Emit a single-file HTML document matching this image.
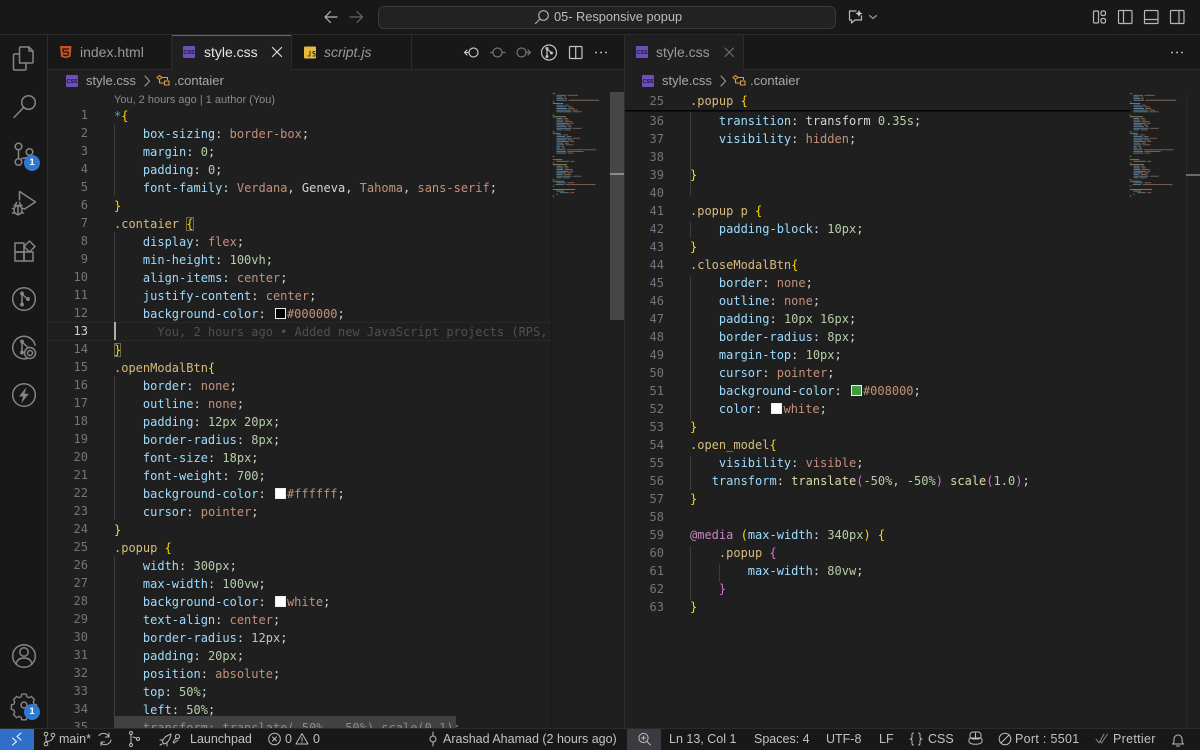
<!DOCTYPE html>
<html><head><meta charset="utf-8"><style>
html,body{margin:0;padding:0;background:#181818;width:1200px;height:750px;overflow:hidden}
body{position:relative;font-family:"Liberation Sans",sans-serif;color:#ccc}
.a{position:absolute}
svg{position:absolute;overflow:visible;fill:none;stroke-linecap:round;stroke-linejoin:round}
.code{position:absolute;font:12px/18px "DejaVu Sans Mono","Liberation Mono",monospace;color:#d4d4d4}
.code div{white-space:pre}
.nums{position:absolute;font:12px/18px "DejaVu Sans Mono","Liberation Mono",monospace;text-align:right;color:#6e7681}
.nums div,.code div{height:18px}
i{font-style:normal}
.p{color:#9cdcfe}.v{color:#c4917a}.n{color:#b5cea8}.s{color:#d7ba7d}.b{color:#ffd700}.m{color:#c586c0}.o{color:#da70d6}.f{color:#dcdcaa}.w{color:#569cd6}
.sw{display:inline-block;width:9px;height:9px;border:1px solid #eee;margin:0 1px 0 2px;vertical-align:-1px}
.g{position:absolute;width:1px;background:#3c3c3c}
.t{position:absolute;white-space:nowrap}
.st{position:absolute;top:731px;font-size:12.5px;line-height:17px;color:#c2c2c2;white-space:nowrap}
.badge{position:absolute;width:16px;height:16px;border-radius:50%;background:#2f7ad1;color:#fff;font:bold 9.5px/16px "Liberation Sans",sans-serif;text-align:center}
.css{position:absolute;width:12px;height:12px;background:#6b4fbb;border-radius:1px;color:#1d1533;font:bold 5.5px/15px "Liberation Sans",sans-serif;text-align:center}
</style></head><body>

<!-- title bar -->
<div class="a" style="left:0;top:34px;width:1200px;height:1px;background:#2b2b2b"></div>
<div class="a" style="left:378px;top:6px;width:456px;height:21px;border:1px solid #3a3a3a;border-radius:6px;background:#222"></div>
<svg style="left:0;top:0" width="1200" height="35" stroke="#b8b8b8" stroke-width="1.2">
<path d="M337 17H325M330.500 11.500L325 17l5.500 5.500"/>
<path stroke="#666" d="M350 17h12.500M357 11.500l5.500 5.500-5.500 5.500"/>
<circle cx="543.500" cy="15.500" r="4.800" stroke="#aaa"/><path stroke="#aaa" d="M540 19l-4.500 4.500"/>
<path d="M856 11h-6.500v9h2l0 3 3.500-3h6.500v-4"/><path stroke="none" fill="#c8c8c8" d="M859 10l1.100 2.400 2.400 1.100-2.400 1.100-1.100 2.400-1.100-2.400-2.400-1.100 2.400-1.100z"/>
<path stroke="#999" d="M869.500 15.500l3.500 3 3.500-3"/>
<g stroke="#b5b5b5">
<rect x="1093.500" y="11" width="5" height="12" rx="1"/><rect x="1101" y="11" width="4.500" height="4.500" rx="1.500"/><rect x="1101" y="18.500" width="4.500" height="4.500" rx="1.500"/>
<rect x="1118.500" y="10.500" width="13.500" height="13" rx="1"/><path d="M1123.500 10.500v13"/>
<rect x="1144.500" y="10.500" width="13.500" height="13" rx="1"/><path d="M1144.500 19.500h13.500"/>
<rect x="1170.500" y="10.500" width="13.500" height="13" rx="1"/><path d="M1179 10.500v13"/>
</g>
</svg>
<div class="t" style="left:554px;top:9px;font-size:12.8px;line-height:16px;color:#bdbdbd">05- Responsive popup</div>

<!-- editor backgrounds -->
<div class="a" style="left:48px;top:35px;width:1152px;height:693px;background:#1f1f1f"></div>
<div class="a" style="left:48px;top:35px;width:1152px;height:34px;background:#181818;border-bottom:1px solid #2b2b2b"></div>
<div class="a" style="left:47px;top:35px;width:1px;height:693px;background:#2b2b2b"></div>
<div class="a" style="left:624px;top:35px;width:1px;height:693px;background:#2e2e2e"></div>

<!-- tabs left -->
<div class="a" style="left:171px;top:35px;width:1px;height:34px;background:#2b2b2b"></div>
<div class="a" style="left:172px;top:35px;width:119px;height:35px;background:#1f1f1f;border-top:1px solid #2f72b8;box-sizing:border-box"></div>
<div class="a" style="left:291px;top:35px;width:1px;height:34px;background:#2b2b2b"></div>
<div class="a" style="left:411px;top:35px;width:1px;height:34px;background:#2b2b2b"></div>
<svg style="left:0;top:0" width="400" height="70">
<path fill="#c9532a" stroke="none" d="M60 46h11.500l-1 10.800-4.800 1.400-4.700-1.400z"/><path stroke="#1f1308" stroke-width="1.300" d="M68.500 49h-5.500l.3 3h5l-.3 3-2.300.8-2.300-.8"/>
<path stroke="#ddd" stroke-width="1.200" d="M272.500 47.500l9 9M281.500 47.500l-9 9"/>
<rect x="304" y="46.500" width="12" height="12" rx="1" fill="#e8b93f"/><path stroke="#40351a" d="M310 51v5h-2M315 51.500h-2v2h2v2.500h-2"/>
</svg>
<div class="t" style="left:80px;top:44px;font-size:14px;line-height:17px;color:#9a9a9a">index.html</div>
<div class="css" style="left:183px;top:46px">CSS</div>
<div class="t" style="left:204px;top:44px;font-size:14px;line-height:17px;color:#e6e6e6">style.css</div>
<div class="t" style="left:324px;top:44px;font-size:14px;line-height:17px;color:#9a9a9a;font-style:italic">script.js</div>

<!-- actions -->
<svg style="left:0;top:0" width="1200" height="70" stroke="#c4c4c4" stroke-width="1.200">
<circle cx="473.500" cy="52.500" r="4.500"/><path d="M469 52.500h-4.500M467 50l-2.500 2.500 2.500 2.500"/>
<g stroke="#747474"><circle cx="497.500" cy="52.500" r="4.500"/><path d="M490.500 52.500h2.500M502 52.500h3"/>
<circle cx="521.500" cy="52.500" r="4.500"/><path d="M526 52.500h4.500M528 50l2.500 2.500-2.500 2.500"/></g>
<circle cx="549" cy="52.500" r="7.500"/><path d="M547 48.500v8M547 49l4.500 3.800"/><circle cx="547" cy="48.500" r=".9" fill="#c4c4c4"/><circle cx="547" cy="56.500" r=".9" fill="#c4c4c4"/><circle cx="551.500" cy="53" r=".9" fill="#c4c4c4"/>
<rect x="569.500" y="46.500" width="12.500" height="12" rx="1"/><path d="M575.700 46.500v12"/>
<path stroke="#ccc" stroke-width="1.800" d="M596 52.500h.1M601 52.500h.1M606 52.500h.1M1172 52.500h.1M1177 52.500h.1M1182 52.500h.1"/>
</svg>

<!-- right tab -->
<div class="a" style="left:625px;top:35px;width:118px;height:35px;background:#1f1f1f"></div>
<div class="a" style="left:743px;top:35px;width:1px;height:34px;background:#2b2b2b"></div>
<div class="css" style="left:636px;top:46px">CSS</div>
<div class="t" style="left:656px;top:44px;font-size:14px;line-height:17px;color:#9a9a9a">style.css</div>
<svg style="left:0;top:0" width="800" height="70"><path stroke="#6f6f6f" stroke-width="1.200" d="M725 48l8.500 8.500M733.500 48l-8.500 8.500"/></svg>

<!-- breadcrumbs -->
<div class="css" style="left:66px;top:75px">CSS</div>
<div class="t" style="left:86px;top:73px;font-size:13px;line-height:16px;color:#a8a8a8">style.css</div>
<div class="t" style="left:174px;top:73px;font-size:13px;line-height:16px;color:#a8a8a8">.contaier</div>
<div class="css" style="left:642px;top:75px">CSS</div>
<div class="t" style="left:662px;top:73px;font-size:13px;line-height:16px;color:#a8a8a8">style.css</div>
<div class="t" style="left:750px;top:73px;font-size:13px;line-height:16px;color:#a8a8a8">.contaier</div>
<svg style="left:0;top:0" width="800" height="95" stroke-width="1.100">
<path stroke="#999" d="M145 76l4.500 5-4.500 5M721 76l4.500 5-4.500 5"/>
<g stroke="#d9a343"><path d="M157 77.500l2.500-2 2.500 2-2.500 2zM159.500 79.500v3.500h5M164.500 81h4.500v4h-4.500zM162 77.500h5.500v2"/></g>
<g stroke="#d9a343"><path d="M733 77.500l2.500-2 2.500 2-2.500 2zM735.500 79.500v3.500h5M740.500 81h4.500v4h-4.500zM738 77.500h5.500v2"/></g>
</svg>
<div class="t" style="left:114px;top:93px;font-size:11px;line-height:14px;color:#8b8b8b">You, 2 hours ago | 1 author (You)</div>

<!-- current line -->
<div class="a" style="left:48px;top:322px;width:503px;height:17px;border-top:1px solid #282828;border-bottom:1px solid #282828"></div>

<!-- indent guides left -->
<div class="g" style="left:114px;top:124px;height:72px"></div>
<div class="g" style="left:114px;top:232px;height:90px"></div>
<div class="g" style="left:114px;top:376px;height:144px"></div>
<div class="g" style="left:114px;top:556px;height:162px"></div>
<div class="a" style="left:114px;top:322px;width:2px;height:18px;background:#aeafad"></div>

<!-- selection -->
<div class="a" style="left:114px;top:716px;width:342px;height:12px;background:#414141"></div>

<!-- left numbers -->
<div class="a" style="left:48px;top:107px;width:503px;height:621px;overflow:hidden">
<div class="nums" style="left:0;top:-1px;width:40px">
<div>1</div><div>2</div><div>3</div><div>4</div><div>5</div><div>6</div><div>7</div><div>8</div><div>9</div><div>10</div><div>11</div><div>12</div><div style="color:#ccc">13</div><div>14</div><div>15</div><div>16</div><div>17</div><div>18</div><div>19</div><div>20</div><div>21</div><div>22</div><div>23</div><div>24</div><div>25</div><div>26</div><div>27</div><div>28</div><div>29</div><div>30</div><div>31</div><div>32</div><div>33</div><div>34</div><div>35</div>
</div>
<div class="code" style="left:66px;top:0;width:437px;overflow:hidden">
<div><i class="w">*</i><i class="b">{</i></div>
<div>    <i class="p">box-sizing</i>: <i class="v">border-box</i>;</div>
<div>    <i class="p">margin</i>: <i class="n">0</i>;</div>
<div>    <i class="p">padding</i>: <i class="n">0</i>;</div>
<div>    <i class="p">font-family</i>: <i class="v">Verdana</i>, Geneva, <i class="v">Tahoma</i>, <i class="v">sans-serif</i>;</div>
<div><i class="b">}</i></div>
<div><i class="s">.contaier</i> <i class="b" style="outline:1px solid #6b6b50;outline-offset:-1px">{</i></div>
<div>    <i class="p">display</i>: <i class="v">flex</i>;</div>
<div>    <i class="p">min-height</i>: <i class="n">100vh</i>;</div>
<div>    <i class="p">align-items</i>: <i class="v">center</i>;</div>
<div>    <i class="p">justify-content</i>: <i class="v">center</i>;</div>
<div>    <i class="p">background-color</i>: <i class="sw" style="background:#000"></i><i class="v">#000000</i>;</div>
<div style="color:#4f4f4f">      You, 2 hours ago • Added new JavaScript projects (RPS, Calculator and more)</div>
<div><i class="b" style="outline:1px solid #6b6b50;outline-offset:-1px">}</i></div>
<div><i class="s">.openModalBtn</i><i class="b">{</i></div>
<div>    <i class="p">border</i>: <i class="v">none</i>;</div>
<div>    <i class="p">outline</i>: <i class="v">none</i>;</div>
<div>    <i class="p">padding</i>: <i class="n">12px 20px</i>;</div>
<div>    <i class="p">border-radius</i>: <i class="n">8px</i>;</div>
<div>    <i class="p">font-size</i>: <i class="n">18px</i>;</div>
<div>    <i class="p">font-weight</i>: <i class="n">700</i>;</div>
<div>    <i class="p">background-color</i>: <i class="sw" style="background:#fff"></i><i class="v">#ffffff</i>;</div>
<div>    <i class="p">cursor</i>: <i class="v">pointer</i>;</div>
<div><i class="b">}</i></div>
<div><i class="s">.popup</i> <i class="b">{</i></div>
<div>    <i class="p">width</i>: <i class="n">300px</i>;</div>
<div>    <i class="p">max-width</i>: <i class="n">100vw</i>;</div>
<div>    <i class="p">background-color</i>: <i class="sw" style="background:#fff"></i><i class="v">white</i>;</div>
<div>    <i class="p">text-align</i>: <i class="v">center</i>;</div>
<div>    <i class="p">border-radius</i>: <i class="n">12px</i>;</div>
<div>    <i class="p">padding</i>: <i class="n">20px</i>;</div>
<div>    <i class="p">position</i>: <i class="v">absolute</i>;</div>
<div>    <i class="p">top</i>: <i class="n">50%</i>;</div>
<div>    <i class="p">left</i>: <i class="n">50%</i>;</div>
<div style="color:#8c8c8c">    transform: translate(-50%, -50%) scale(0.1);</div>
</div>
</div>

<!-- right code -->
<div class="g" style="left:690px;top:110px;height:86px"></div>
<div class="g" style="left:690px;top:222px;height:16px"></div>
<div class="g" style="left:690px;top:276px;height:144px"></div>
<div class="g" style="left:690px;top:456px;height:34px"></div>
<div class="g" style="left:690px;top:546px;height:54px"></div>
<div class="g" style="left:719px;top:564px;height:18px"></div>
<div class="nums" style="left:625px;top:112px;width:39px">
<div>36</div><div>37</div><div>38</div><div>39</div><div>40</div><div>41</div><div>42</div><div>43</div><div>44</div><div>45</div><div>46</div><div>47</div><div>48</div><div>49</div><div>50</div><div>51</div><div>52</div><div>53</div><div>54</div><div>55</div><div>56</div><div>57</div><div>58</div><div>59</div><div>60</div><div>61</div><div>62</div><div>63</div>
</div>
<div class="code" style="left:690px;top:112px">
<div>    <i class="p">transition</i>: transform <i class="n">0.35s</i>;</div>
<div>    <i class="p">visibility</i>: <i class="v">hidden</i>;</div>
<div></div>
<div><i class="b">}</i></div>
<div></div>
<div><i class="s">.popup p</i> <i class="b">{</i></div>
<div>    <i class="p">padding-block</i>: <i class="n">10px</i>;</div>
<div><i class="b">}</i></div>
<div><i class="s">.closeModalBtn</i><i class="b">{</i></div>
<div>    <i class="p">border</i>: <i class="v">none</i>;</div>
<div>    <i class="p">outline</i>: <i class="v">none</i>;</div>
<div>    <i class="p">padding</i>: <i class="n">10px 16px</i>;</div>
<div>    <i class="p">border-radius</i>: <i class="n">8px</i>;</div>
<div>    <i class="p">margin-top</i>: <i class="n">10px</i>;</div>
<div>    <i class="p">cursor</i>: <i class="v">pointer</i>;</div>
<div>    <i class="p">background-color</i>: <i class="sw" style="background:#3f9b3f"></i><i class="v">#008000</i>;</div>
<div>    <i class="p">color</i>: <i class="sw" style="background:#fff"></i><i class="v">white</i>;</div>
<div><i class="b">}</i></div>
<div><i class="s">.open_model</i><i class="b">{</i></div>
<div>    <i class="p">visibility</i>: <i class="v">visible</i>;</div>
<div>   <i class="p">transform</i>: <i class="f">translate</i><i class="o">(</i><i class="n">-50%, -50%</i><i class="o">)</i> <i class="f">scale</i><i class="o">(</i><i class="n">1.0</i><i class="o">)</i>;</div>
<div><i class="b">}</i></div>
<div></div>
<div><i class="m">@media</i> <i class="b">(</i><i class="p">max-width</i>: <i class="n">340px</i><i class="b">)</i> <i class="b">{</i></div>
<div>    <i class="s">.popup</i> <i class="o">{</i></div>
<div>        <i class="p">max-width</i>: <i class="n">80vw</i>;</div>
<div>    <i class="o">}</i></div>
<div><i class="b">}</i></div>
</div>

<!-- sticky scroll -->
<div class="a" style="left:625px;top:92px;width:505px;height:18px;background:#1f1f1f"></div>
<div class="a" style="left:625px;top:110px;width:505px;height:2px;background:linear-gradient(#000,#151515)"></div>
<div class="nums" style="left:625px;top:92px;width:39px"><div>25</div></div>
<div class="code" style="left:690px;top:92px"><div><i class="s">.popup</i> <i class="b">{</i></div></div>

<!-- minimaps -->
<svg width="0" height="0" style="left:0;top:0"><g id="mm" fill="none" stroke-width=".55">
<path stroke="#5f8196" d="M4 2h10M4 3h6M4 4h7M4 5h11M4 8h7M4 9h10M4 10h11M4 11h15M4 12h16M4 16h6M4 17h7M4 18h7M4 19h13M4 20h9M4 21h11M4 22h16M4 23h6M4 26h5M4 27h9M4 28h16M4 29h10M4 30h13M4 31h7M4 32h8M4 33h3M4 34h4M4 35h9M4 36h10M4 37h10M4 42h13M4 45h6M4 46h7M4 47h7M4 48h13M4 49h10M4 50h6M4 51h16M4 52h5M4 55h10M3 56h9M8 61h9"/>
<path stroke="#846555" d="M16 2h11M12 3h2M13 4h2M17 5h33M13 8h4M16 9h5M17 10h6M21 11h6M22 12h9M12 16h4M13 17h4M13 18h8M19 19h3M15 20h4M17 21h3M22 22h9M12 23h7M11 26h5M15 27h5M22 28h7M16 29h6M19 30h4M13 31h4M14 32h8M9 33h3M10 34h3M15 35h32M16 36h17M16 37h6M19 42h4M12 45h4M13 46h4M13 47h8M19 48h3M16 49h4M12 50h7M22 51h9M11 52h7M16 55h7M14 56h32M19 61h4"/>
<path stroke="#8f8558" d="M0 1h2M0 6h1M0 7h11M0 14h1M0 15h14M0 24h1M0 25h8M0 39h1M0 41h10M0 43h1M0 44h15M0 53h1M0 54h12M0 57h1M0 59h24M4 60h8M4 62h1M0 63h1"/>
</g></svg>
<svg style="left:553px;top:92px" width="57" height="104" viewBox="0 0 62 63" preserveAspectRatio="none"><use href="#mm"/></svg>
<svg style="left:1130px;top:92px" width="57" height="104" viewBox="0 0 62 63" preserveAspectRatio="none"><use href="#mm"/></svg>
<div class="a" style="left:610px;top:92px;width:14px;height:228px;background:#464646"></div>
<div class="a" style="left:610px;top:173px;width:14px;height:2px;background:#8a8a8a"></div>
<div class="a" style="left:1186px;top:92px;width:1px;height:636px;background:#282828"></div>
<div class="a" style="left:1186px;top:174px;width:14px;height:2px;background:#6a6a6a"></div>
<div class="a" style="left:551px;top:92px;width:1px;height:636px;background:#1a1a1a"></div>

<!-- activity bar -->
<svg style="left:0;top:0" width="48" height="728" stroke="#858585" stroke-width="1.500">
<path d="M19.500 53v-5a1 1 0 0 1 1-1h8.500l4 4v11a1 1 0 0 1-1 1H19.500z"/><path d="M29 47v4h4"/><path d="M19.500 54H14.500a1 1 0 0 0-1 1v14a1 1 0 0 0 1 1h10.500a1 1 0 0 0 1-1v-6"/>
<circle cx="28.500" cy="102.500" r="6.800"/><path d="M23.500 107.500l-9.500 10"/>
<circle cx="18.500" cy="146.500" r="3.300"/><circle cx="18.500" cy="162" r="3.300"/><circle cx="29.500" cy="152" r="3.300"/><path d="M18.500 150v8.500M21.800 158.500c3-.5 7.700-1 7.700-3"/>
<path d="M19.500 200v-8.500l16 10.500-11 7"/>
<ellipse cx="18" cy="210" rx="4" ry="4.500"/><path d="M14 205.500h8M15.500 204.500l1-2M20.500 204.500l-1-2M12.500 208.500h1.500M12.500 213h2M23.500 208.500h-1.500M23.500 213h-2M18 206v9"/>
<rect x="15" y="243" width="9" height="9"/><rect x="15" y="252" width="9" height="9"/><rect x="24" y="252" width="9" height="9"/><path d="M29.500 241l5.500 5.500-5.500 5.500-5.500-5.500z"/>
<circle cx="24" cy="299" r="11.300"/><path d="M22 293.500v11M22 294l6 5.500"/><circle cx="22" cy="293.500" r="1.200" fill="#858585"/><circle cx="22" cy="304.500" r="1.200" fill="#858585"/><circle cx="28" cy="299" r="1.200" fill="#858585"/>
<path d="M35 345a11.300 11.300 0 1 0-8 13.500"/><path d="M22 341.500v11M22 342l6 5.500"/><circle cx="22" cy="341.500" r="1.200" fill="#858585"/><circle cx="22" cy="352.500" r="1.200" fill="#858585"/><circle cx="30" cy="353" r="5.500"/><circle cx="30" cy="353" r="2.500"/>
<circle cx="24" cy="395" r="11.300"/><path fill="#858585" stroke="none" d="M26.500 387l-7.500 9.500h4.200l-2.200 7 7.800-9.800h-4.300z"/>
<circle cx="24" cy="656" r="11.300"/><circle cx="24" cy="652" r="4.200"/><path d="M16 664c1-4.500 4-6 8-6s7 1.500 8 6"/>
<path d="M21.500 693h5l.7 2.800 2.500 1.100 2.500-1.400 3.500 3.500-1.400 2.500 1 2.600 2.700.7v5l-2.700.7-1 2.500 1.400 2.500-3.500 3.500-2.500-1.400-2.500 1-.7 2.900h-5l-.7-2.800-2.500-1-2.500 1.400-3.500-3.500 1.400-2.500-1-2.500-2.700-.8v-5l2.700-.7 1-2.600-1.400-2.500 3.500-3.500 2.500 1.400 2.500-1.100z" transform="translate(2.400 70.500) scale(.9)"/><circle cx="24" cy="705" r="3"/>
</svg>
<div class="badge" style="left:24px;top:155px">1</div>
<div class="badge" style="left:24px;top:704px">1</div>

<!-- status bar -->
<div class="a" style="left:0;top:728px;width:1200px;height:22px;background:#181818;border-top:1px solid #2b2b2b;box-sizing:border-box"></div>
<div class="a" style="left:0;top:729px;width:34px;height:21px;background:#2f6fc9"></div>
<div class="a" style="left:627px;top:729px;width:34px;height:21px;background:#3a3b41"></div>
<svg style="left:0;top:728px" width="1200" height="22" stroke="#bdbdbd" stroke-width="1">
<path stroke="#fff" d="M12.500 10l4 3.500-4 3.500M21 5l-4 3.500 4 3.500"/>
<circle cx="46" cy="6" r="1.800"/><circle cx="46" cy="16" r="1.800"/><circle cx="53" cy="7" r="1.800"/><path d="M46 8v6M46 13.500c3 0 7-1 7-4.500"/>
<path d="M99 7.500a6 6 0 0 1 10 1.500M111 12a6 6 0 0 1-10 3M109 5v4h-3.500M101 17.500v-3.500h3.500"/>
<circle cx="131" cy="5" r="1.500"/><circle cx="131" cy="17" r="1.500"/><circle cx="138" cy="11" r="1.500"/><path d="M131 6.500v9M133 9l3 1"/>
<path d="M163 15c-1-2 0-6 8-9-1 7-4 9-7 10zM160 12h3M167 15v3M160 17l2-1"/><path d="M176 10a2 2 0 1 0 3-3 2 2 0 0 0-3 3zM176 10l-3 4 1 1 4-3"/>
<circle cx="274.500" cy="11" r="5.800"/><path d="M272.500 9l4 4M276.500 9l-4 4"/>
<path d="M302 5.500l6 10.500h-12zM302 9.500v3.500M302 14.500h.1"/>
<circle cx="433" cy="11" r="3"/><path d="M433 4v4M433 14v4"/>
<circle cx="643.500" cy="10" r="4.600"/><path d="M647 13.500l3.500 3.500M643.500 8v4M641.500 10h4"/>
<path d="M914 5c-2 0-1.500 2.500-1.500 4s-1 2-2 2c1 0 2 .5 2 2s-.5 4 1.500 4M919 5c2 0 1.500 2.500 1.500 4s1 2 2 2c-1 0-2 .5-2 2s.5 4-1.500 4" transform="translate(-.5)"/>
<rect x="970" y="4" width="11" height="7" rx="3"/><path d="M969 12c0-2 1-2 2-2h9c1 0 2 0 2 2v2c-2 3-11 3-13 0z"/><path d="M975.500 5v6"/>
<circle cx="1005" cy="11" r="5.800"/><path d="M1001 15l8-8"/>
<path stroke="#888" d="M1096 11l3 4 5-9M1100 13l1.500 2 6-9"/>
<path d="M1172.500 16h11c-1.500-1-1.500-2.500-1.500-5a4 4 0 0 0-8 0c0 2.500 0 4-1.500 5zM1176.500 18h3"/>
</svg>
<div class="st" style="left:59px">main*</div>
<div class="st" style="left:190px">Launchpad</div>
<div class="st" style="left:285px">0</div>
<div class="st" style="left:313px">0</div>
<div class="st" style="left:443px">Arashad Ahamad (2 hours ago)</div>
<div class="st" style="left:669px">Ln 13, Col 1</div>
<div class="st" style="left:754px">Spaces: 4</div>
<div class="st" style="left:826px">UTF-8</div>
<div class="st" style="left:879px">LF</div>
<div class="st" style="left:928px">CSS</div>
<div class="st" style="left:1015px;letter-spacing:.3px">Port : 5501</div>
<div class="st" style="left:1113px;letter-spacing:.3px">Prettier</div>
</body></html>
